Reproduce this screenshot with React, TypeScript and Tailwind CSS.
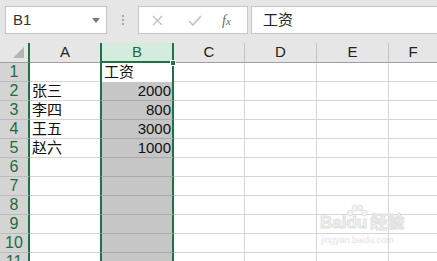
import React from "react";

const ROWS: { n: number; a?: string; b?: string }[] = [
  { n: 1, b: "工资" },
  { n: 2, a: "张三", b: "2000" },
  { n: 3, a: "李四", b: "800" },
  { n: 4, a: "王五", b: "3000" },
  { n: 5, a: "赵六", b: "1000" },
  { n: 6 },
  { n: 7 },
  { n: 8 },
  { n: 9 },
  { n: 10 },
  { n: 11 },
];

const font = "font-['Liberation_Sans','Noto_Sans_CJK_SC',sans-serif]";

function Toolbar() {
  return (
    <div className="h-[43px] bg-[#e6e6e6] flex items-start pt-[6px] pl-[5px]">
      <div className="w-[102px] h-[28px] bg-white border border-[#c6c6c6] flex items-center pl-[7px] pr-[6px]">
        <span className="text-[15px] text-[#333] flex-1">B1</span>
        <svg width="8" height="5" viewBox="0 0 8 5">
          <path d="M0 0h8L4 5z" fill="#777" />
        </svg>
      </div>
      <div className="w-[31px] h-[28px] flex flex-col items-center justify-center gap-[2px]">
        <span className="w-[2px] h-[2px] bg-[#a8a8a8]" />
        <span className="w-[2px] h-[2px] bg-[#a8a8a8]" />
        <span className="w-[2px] h-[2px] bg-[#a8a8a8]" />
      </div>
      <div className="w-[110px] h-[28px] bg-white border border-[#c6c6c6] flex items-center">
        <svg width="11" height="11" viewBox="0 0 11 11" className="ml-[13px]">
          <path d="M1 1l9 9M10 1l-9 9" stroke="#c2c2c2" strokeWidth="1.4" />
        </svg>
        <svg width="14" height="11" viewBox="0 0 14 11" className="ml-[25px]">
          <path d="M1 6l4 4 8-9" stroke="#c2c2c2" strokeWidth="1.6" fill="none" />
        </svg>
        <span className="ml-[20px] text-[14px] italic text-[#6b6b6b] font-['Liberation_Serif',serif]">
          f<span className="text-[11px]">x</span>
        </span>
      </div>
      <div className="flex-1 ml-[3px] h-[28px] bg-white border border-r-0 border-[#c6c6c6] flex items-center pl-[11px]">
        <span className="text-[15px] text-[#222]">工资</span>
      </div>
    </div>
  );
}

function HeaderRow() {
  return (
    <div className="flex h-[20px] bg-[#e6e6e6]">
      <div className="w-[30px] h-[20px] border-r-2 border-b border-r-[#1f7245] border-b-[#9e9e9e] relative">
        <svg width="11" height="11" viewBox="0 0 11 11" className="absolute right-[4px] bottom-[4px]">
          <path d="M11 0v11H0z" fill="#b4b4b4" />
        </svg>
      </div>
      <div className="w-[70px] border-b border-[#9e9e9e] flex items-center justify-center text-[15px] text-[#222]">
        A
      </div>
      <div className="w-[74px] bg-[#d3ecdd] border-x-2 border-b-2 border-[#1f7245] flex items-center justify-center text-[15px] text-[#1f6b40]">
        B
      </div>
      <div className="w-[71px] border-r border-b border-r-[#c3c3c3] border-b-[#9e9e9e] flex items-center justify-center text-[15px] text-[#222]">
        C
      </div>
      <div className="w-[72px] border-r border-b border-r-[#c3c3c3] border-b-[#9e9e9e] flex items-center justify-center text-[15px] text-[#222]">
        D
      </div>
      <div className="w-[72px] border-r border-b border-r-[#c3c3c3] border-b-[#9e9e9e] flex items-center justify-center text-[15px] text-[#222]">
        E
      </div>
      <div className="flex-1 border-b border-[#9e9e9e] flex items-center justify-center text-[15px] text-[#222]">
        F
      </div>
    </div>
  );
}

function Row({ n, a, b }: { n: number; a?: string; b?: string }) {
  const first = n === 1;
  return (
    <div className="flex h-[19px]">
      <div className="w-[30px] bg-[#d4d4d4] border-r-2 border-b border-r-[#1f7245] border-b-[#bcbcbc] flex items-center justify-center text-[16px] text-[#1f6b40]">
        {n}
      </div>
      <div className="w-[70px] bg-white border-b border-[#d6d6d6] flex items-center pl-[2px] text-[15px] text-[#111]">
        {a}
      </div>
      <div
        className={
          "w-[74px] border-x-2 border-[#1f7245] flex items-center text-[15px] text-[#111] relative " +
          (first ? "bg-white pl-[2px]" : "bg-[#c6c6c6] border-b border-b-[#ababab] justify-end pr-[1px]")
        }
      >
        {b}
        {first && (
          <span className="absolute right-[-4px] top-[-3px] w-[6px] h-[6px] bg-[#1f7245] border border-white" />
        )}
      </div>
      <div className="w-[71px] bg-white border-r border-b border-[#d6d6d6]" />
      <div className="w-[72px] bg-white border-r border-b border-[#d6d6d6]" />
      <div className="w-[72px] bg-white border-r border-b border-[#d6d6d6]" />
      <div className="flex-1 bg-white border-b border-[#d6d6d6]" />
    </div>
  );
}

function Watermark() {
  return (
    <div className="absolute left-[320px] top-[214px] flex flex-col items-start pointer-events-none">
      <div className="flex items-end text-[17px] font-bold text-[#f4f4f4] leading-none [-webkit-text-stroke:1px_#e0e0e0]">
        <span>Bai</span>
        <span className="relative">
          <svg width="22" height="14" viewBox="0 0 22 14" className="absolute left-0 top-[-10px]">
            <g fill="#f4f4f4" stroke="#e0e0e0">
              <ellipse cx="4" cy="9" rx="2.5" ry="3" />
              <ellipse cx="8.5" cy="4" rx="2.5" ry="3" />
              <ellipse cx="14" cy="4" rx="2.5" ry="3" />
              <ellipse cx="18.5" cy="9" rx="2.5" ry="3" />
            </g>
          </svg>
          du
        </span>
        <span className="ml-[3px]">经验</span>
      </div>
      <span className="text-[9px] text-[#e2e2e2] leading-none mt-[5px] ml-[1px]">jingyan.baidu.com</span>
    </div>
  );
}

export default function App() {
  return (
    <div className={"w-[437px] h-[261px] overflow-hidden bg-white relative " + font}>
      <Toolbar />
      <HeaderRow />
      {ROWS.map((r) => (
        <Row key={r.n} {...r} />
      ))}
      <Watermark />
    </div>
  );
}
